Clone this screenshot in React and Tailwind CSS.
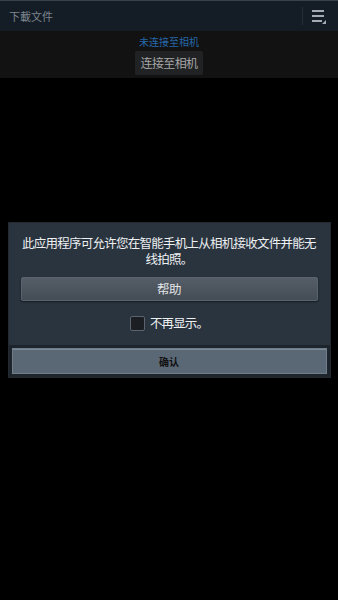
export default function App() {
  const cjk = { fontFamily: '"Noto Sans CJK SC", "Noto Sans", sans-serif' };
  return (
    <div className="w-[338px] h-[600px] bg-black flex flex-col overflow-hidden" style={cjk}>
      <div className="h-[31px] bg-[#141d26] border-t border-[#3b4148] flex items-center justify-between pl-[9px] pr-[11px]">
        <span className="text-[11px] text-[#7d858e] leading-none">下載文件</span>
        <div className="flex items-center h-full">
          <div className="w-px h-[18px] bg-[#252d36] mr-[8px]"></div>
          <svg width="16" height="18" viewBox="0 0 16 18">
            <rect x="1" y="3" width="12" height="2" fill="#a5abb2" />
            <rect x="1" y="8" width="12" height="2" fill="#a5abb2" />
            <rect x="1" y="13" width="10" height="2" fill="#a5abb2" />
            <polygon points="15,13 15,17 11,17" fill="#a5abb2" />
          </svg>
        </div>
      </div>
      <div className="h-[47px] bg-[#121212] flex flex-col items-center pt-[4px]">
        <span className="text-[10px] leading-[13px] text-[#2568a8]">未连接至相机</span>
        <div className="mt-[3px] w-[68px] h-[24px] bg-[#202224] rounded-[2px] flex items-center justify-center text-[12px] tracking-[-0.6px] text-[#a6a6a6]">连接至相机</div>
      </div>
      <div className="flex-1 flex flex-col items-center pt-[144px]">
        <div className="w-[323px] border border-[#24292f] bg-[#29343f] flex flex-col">
          <div className="px-[12px] pt-[12px] pb-[14px] flex flex-col">
            <div className="flex flex-col items-center text-[12.5px] leading-[16px] tracking-[-0.75px] text-[#eef0f2] whitespace-nowrap">
              <span>此应用程序可允许您在智能手机上从相机接收文件并能无</span>
              <span>线拍照。</span>
            </div>
            <div className="mt-[10px] h-[24px] rounded-[2px] border border-[#5a636d] bg-gradient-to-b from-[#555e68] to-[#444c55] shadow-[0_1px_2px_rgba(0,0,0,0.5)] flex items-center justify-center text-[12.5px] tracking-[-0.4px] text-[#e2e4e6]">帮助</div>
            <div className="mt-[14px] flex items-center justify-center gap-[5px]">
              <div className="w-[15px] h-[15px] rounded-[2px] bg-[#1b1e22] border border-[#5b646e]"></div>
              <span className="text-[12.5px] leading-[16px] tracking-[-0.9px] text-[#eef0f2]">不再显示。</span>
            </div>
          </div>
          <div className="bg-[#1d242b] px-[3px] pt-[3px] pb-[3px]">
            <div className="h-[26px] bg-[#5a6775] border border-[#6f7c89] shadow-[inset_0_1px_0_#7c8996] flex items-center justify-center text-[10px] font-bold text-[#111]">确认</div>
          </div>
        </div>
      </div>
    </div>
  );
}
